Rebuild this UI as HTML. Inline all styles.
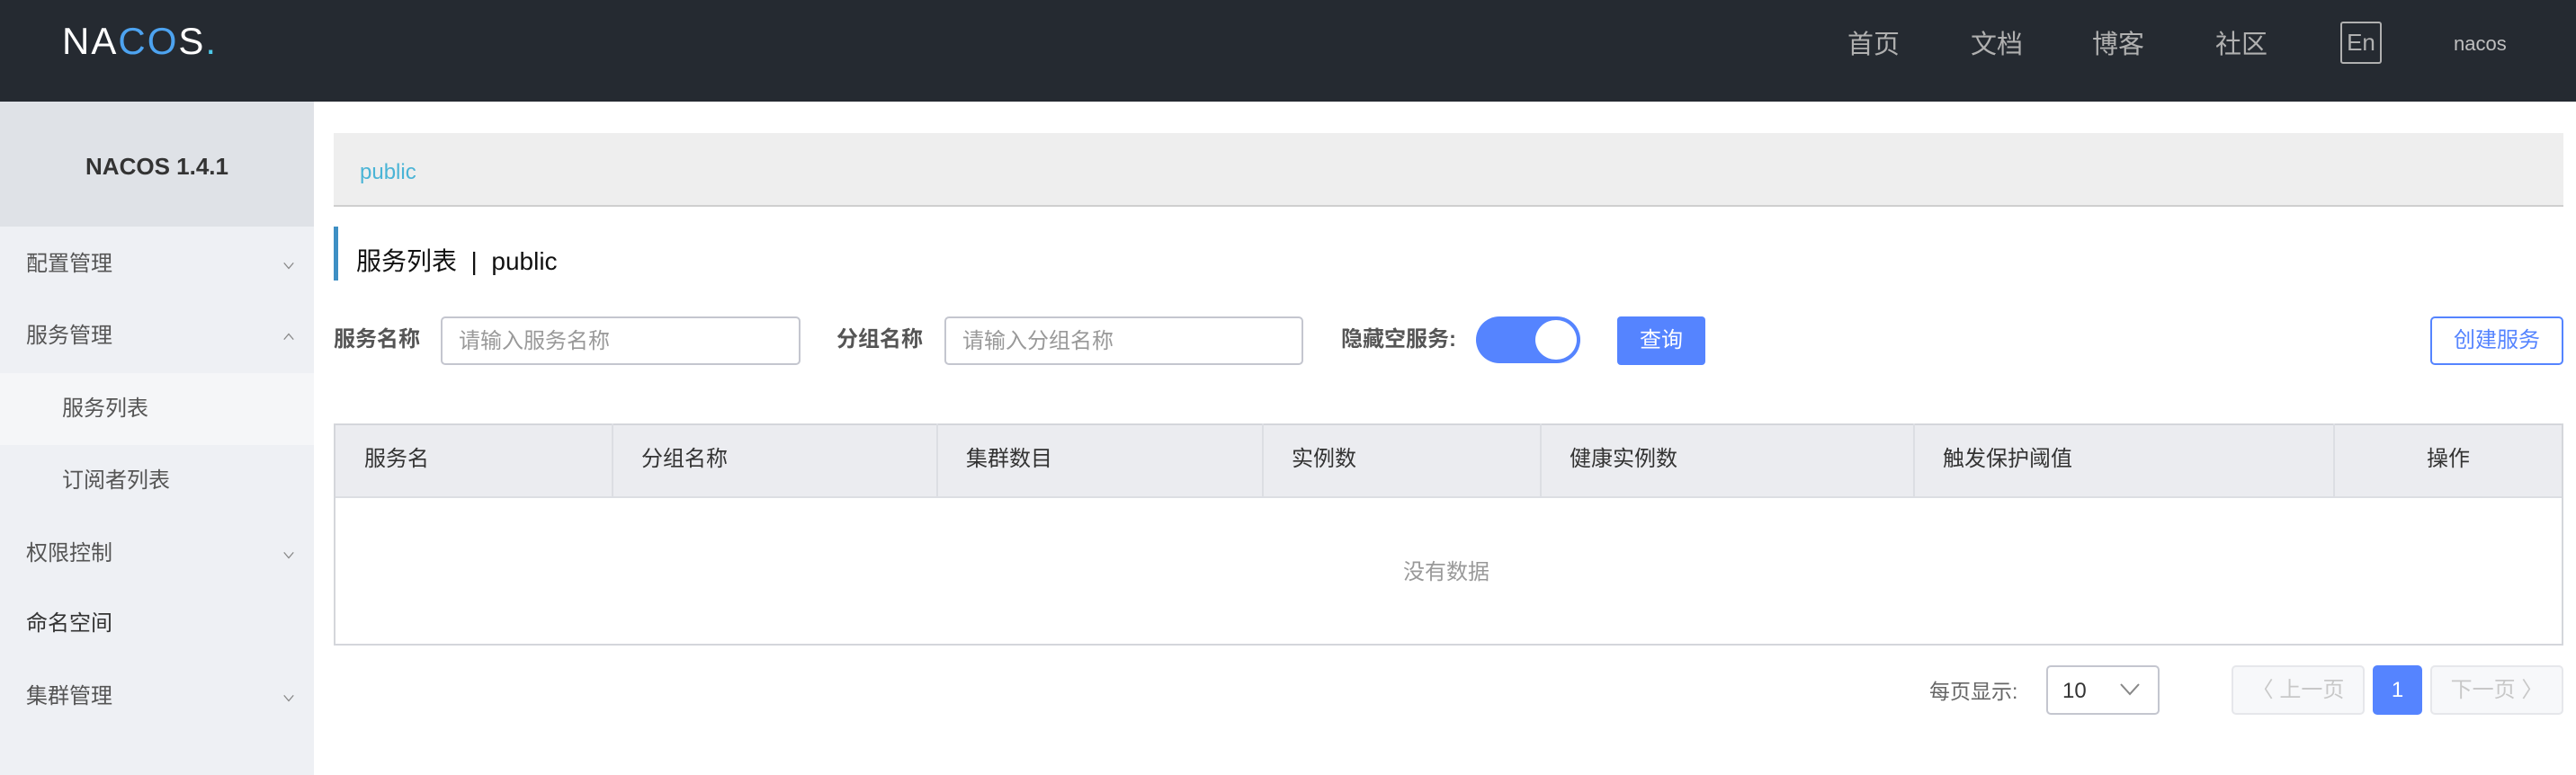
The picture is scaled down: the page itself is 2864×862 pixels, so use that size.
<!DOCTYPE html>
<html><head><meta charset="utf-8"><style>
*{box-sizing:border-box;margin:0;padding:0}
body{width:2864px;height:862px;overflow:hidden;background:#fff;font-family:"Liberation Sans","Noto Sans CJK SC",sans-serif;color:#333;position:relative}
.a{position:absolute;white-space:nowrap}
.hdr{left:0;top:0;width:2864px;height:113px;background:#252a31}
.nav{color:#b0b0b0;font-size:29px;top:36px;line-height:1}
.side{left:0;top:113px;width:349px;height:749px;background:#eef0f4}
.mi{font-size:24px;color:#555;line-height:1;left:29px}
.chev{left:314px;width:14px;height:14px}
.vl{top:471px;width:2px;height:83px;background:#dcdee3}
.th{top:499px;font-size:24px;color:#333;line-height:1}
.inp{top:352px;height:54px;border:2px solid #c4c6cf;border-radius:5px;background:#fff;font-size:24px;color:#999;padding:14px 18px;line-height:1}
.lbl{top:366px;font-size:24px;font-weight:bold;color:#555;line-height:1}
</style></head><body>
<div class="a hdr"></div>
<div class="a" style="left:69px;top:25px;font-size:42px;color:#fff;letter-spacing:2px;line-height:1">NA<span style="color:#4da3f0">CO</span>S<span style="color:#4dc8e8">.</span></div>
<div class="a nav" style="left:2054px">首页</div>
<div class="a nav" style="left:2191px">文档</div>
<div class="a nav" style="left:2326px">博客</div>
<div class="a nav" style="left:2463px">社区</div>
<div class="a" style="left:2602px;top:24px;width:46px;height:47px;border:2px solid #b0b0b0;border-radius:3px;color:#b0b0b0;font-size:26px;text-align:center;line-height:43px">En</div>
<div class="a" style="left:2728px;top:36px;color:#bfbfbf;font-size:22px">nacos</div>

<div class="a side"></div>
<div class="a" style="left:0;top:113px;width:349px;height:139px;background:#dfe2e7"></div>
<div class="a" style="left:0;top:170px;width:349px;text-align:center;font-size:26px;font-weight:bold;color:#333">NACOS 1.4.1</div>
<div class="a" style="left:0;top:415px;width:349px;height:80px;background:#f5f6f8"></div>
<div class="a mi" style="top:282px">配置管理</div>
<div class="a mi" style="top:362px">服务管理</div>
<div class="a mi" style="top:443px;left:69px">服务列表</div>
<div class="a mi" style="top:523px;left:69px">订阅者列表</div>
<div class="a mi" style="top:604px">权限控制</div>
<div class="a mi" style="top:682px;color:#333">命名空间</div>
<div class="a mi" style="top:763px">集群管理</div>
<svg class="a chev" style="top:288px" viewBox="0 0 16 16"><path d="M2 5l6 7 6-7" fill="none" stroke="#888" stroke-width="1.5"/></svg>
<svg class="a chev" style="top:368px" viewBox="0 0 16 16"><path d="M2 11l6-7 6 7" fill="none" stroke="#888" stroke-width="1.5"/></svg>
<svg class="a chev" style="top:610px" viewBox="0 0 16 16"><path d="M2 5l6 7 6-7" fill="none" stroke="#888" stroke-width="1.5"/></svg>
<svg class="a chev" style="top:769px" viewBox="0 0 16 16"><path d="M2 5l6 7 6-7" fill="none" stroke="#888" stroke-width="1.5"/></svg>

<div class="a" style="left:371px;top:148px;width:2479px;height:82px;background:#eeeeee;border-bottom:2px solid #cfcfcf"></div>
<div class="a" style="left:400px;top:178px;font-size:24px;color:#4ab4d6">public</div>
<div class="a" style="left:371px;top:252px;width:5px;height:60px;background:#3e8fc4"></div>
<div class="a" style="left:396px;top:269px;font-size:28px;color:#111">服务列表 &nbsp;|&nbsp; public</div>

<div class="a lbl" style="left:371px">服务名称</div>
<div class="a inp" style="left:490px;width:400px">请输入服务名称</div>
<div class="a lbl" style="left:930px">分组名称</div>
<div class="a inp" style="left:1050px;width:399px">请输入分组名称</div>
<div class="a lbl" style="left:1491px">隐藏空服务:</div>
<div class="a" style="left:1641px;top:352px;width:116px;height:52px;border-radius:26px;background:#5584ff"></div>
<div class="a" style="left:1707px;top:356px;width:46px;height:44px;border-radius:50%;background:#fff"></div>
<div class="a" style="left:1798px;top:352px;width:98px;height:54px;border-radius:4px;background:#5584ff;color:#fff;font-size:24px;text-align:center;line-height:54px">查询</div>
<div class="a" style="left:2702px;top:352px;width:148px;height:54px;border-radius:5px;border:2px solid #5584ff;color:#5584ff;font-size:24px;text-align:center;line-height:50px">创建服务</div>

<div class="a" style="left:371px;top:471px;width:2479px;height:247px;border:2px solid #d4d6db"></div>
<div class="a" style="left:373px;top:473px;width:2475px;height:81px;background:#ebecf0;border-bottom:2px solid #dcdee3"></div>
<div class="a vl" style="left:680px"></div><div class="a vl" style="left:1041px"></div><div class="a vl" style="left:1403px"></div><div class="a vl" style="left:1712px"></div><div class="a vl" style="left:2127px"></div><div class="a vl" style="left:2594px"></div>
<div class="a th" style="left:405px">服务名</div>
<div class="a th" style="left:713px">分组名称</div>
<div class="a th" style="left:1074px">集群数目</div>
<div class="a th" style="left:1436px">实例数</div>
<div class="a th" style="left:1745px">健康实例数</div>
<div class="a th" style="left:2160px">触发保护阈值</div>
<div class="a th" style="left:2698px">操作</div>
<div class="a" style="left:1560px;top:616px;font-size:24px;color:#999">没有数据</div>

<div class="a" style="left:2145px;top:750px;font-size:23px;color:#666">每页显示:</div>
<div class="a" style="left:2275px;top:740px;width:126px;height:55px;border:2px solid #c4c6cf;border-radius:5px;font-size:24px;color:#333;padding:15px 0 0 16px;line-height:1">10</div>
<svg class="a" style="left:2356px;top:758px" width="24" height="16" viewBox="0 0 24 16"><path d="M2 3l10 11 10-11" fill="none" stroke="#888" stroke-width="2"/></svg>
<div class="a" style="left:2481px;top:740px;width:148px;height:55px;border:2px solid #e6e7eb;border-radius:5px;background:#f7f8fa;color:#c8c8c8;font-size:24px;text-align:center;line-height:51px">〈 上一页</div>
<div class="a" style="left:2638px;top:740px;width:55px;height:55px;border-radius:5px;background:#5584ff;color:#fff;font-size:24px;text-align:center;line-height:55px">1</div>
<div class="a" style="left:2702px;top:740px;width:148px;height:55px;border:2px solid #e6e7eb;border-radius:5px;background:#f7f8fa;color:#c8c8c8;font-size:24px;text-align:center;line-height:51px">下一页 〉</div>
</body></html>
